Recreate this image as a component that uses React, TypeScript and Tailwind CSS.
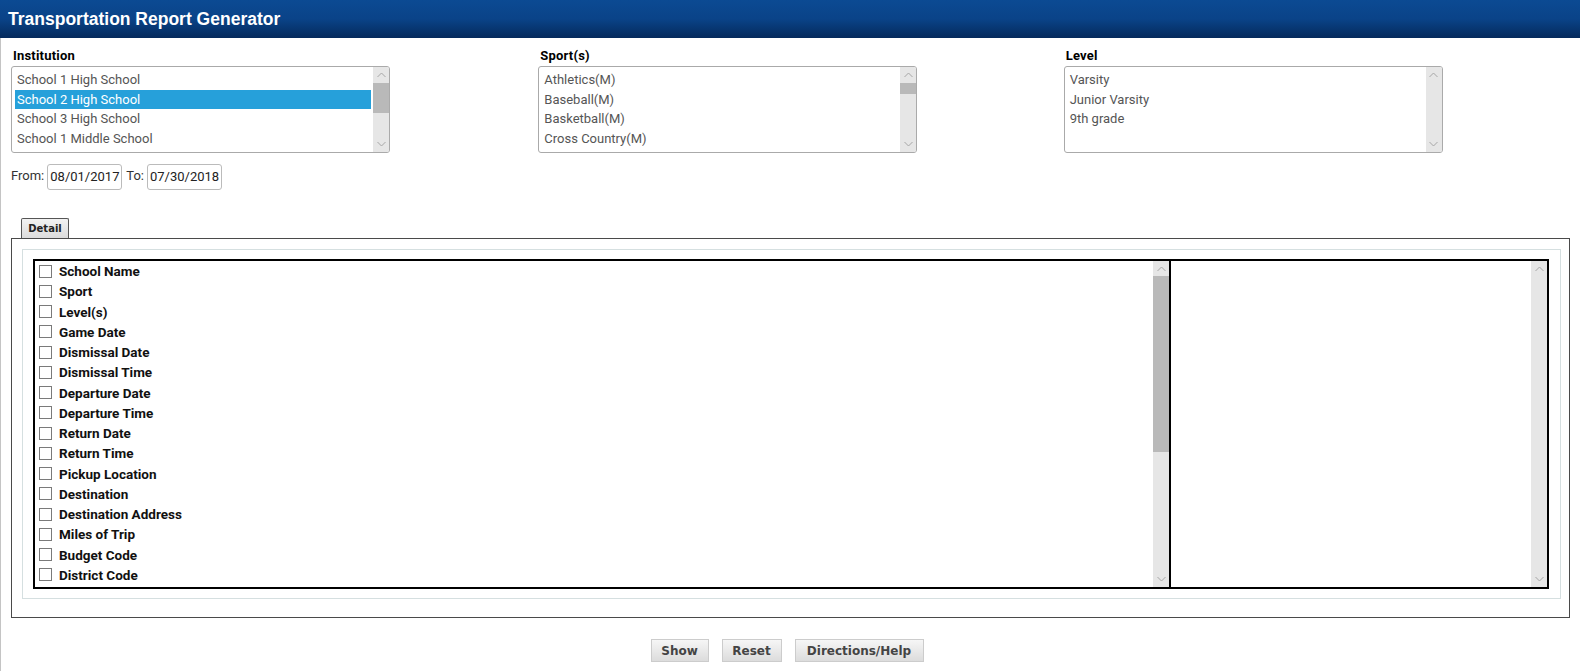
import React from 'react';

const INSTITUTIONS = ['School 1 High School', 'School 2 High School', 'School 3 High School', 'School 1 Middle School'];
const SPORTS = ['Athletics(M)', 'Baseball(M)', 'Basketball(M)', 'Cross Country(M)'];
const LEVELS = ['Varsity', 'Junior Varsity', '9th grade'];

const FIELDS = [
  'School Name',
  'Sport',
  'Level(s)',
  'Game Date',
  'Dismissal Date',
  'Dismissal Time',
  'Departure Date',
  'Departure Time',
  'Return Date',
  'Return Time',
  'Pickup Location',
  'Destination',
  'Destination Address',
  'Miles of Trip',
  'Budget Code',
  'District Code',
];

function Chevron({ up }: { up?: boolean }) {
  return (
    <svg width="9" height="6" viewBox="0 0 9 6" className="block">
      <polyline
        points={up ? '0.5,5 4.5,1 8.5,5' : '0.5,1 4.5,5 8.5,1'}
        fill="none"
        stroke="#a6a6a6"
        strokeWidth="1"
      />
    </svg>
  );
}

// fake scrollbar: thumb given as [top, height] in px
function Scrollbar({ thumb, arrow = 16 }: { thumb?: [number, number]; arrow?: number }) {
  return (
    <div className="w-[16px] h-full bg-[#e6e6e6] relative shrink-0">
      <div className="absolute top-0 left-0 w-full flex justify-center" style={{ height: arrow, paddingTop: 5 }}>
        <Chevron up />
      </div>
      {thumb && (
        <div className="absolute left-0 w-full bg-[#b9b9b9]" style={{ top: thumb[0], height: thumb[1] }} />
      )}
      <div className="absolute bottom-0 left-0 w-full flex justify-center pb-[5px]">
        <Chevron />
      </div>
    </div>
  );
}

function ListBox({ items, selected, thumb }: { items: string[]; selected?: number; thumb?: [number, number] }) {
  return (
    <div className="w-[379px] h-[87px] border border-[#aaaaaa] rounded-[3px] flex overflow-hidden bg-white">
      <div className="flex-1 pt-[3px] pl-[3px] pr-[2px]">
        {items.map((it, i) => (
          <div
            key={it}
            className={`h-[19.5px] leading-[19.5px] pl-[2px] text-[13px] ${
              i === selected ? 'bg-[#26a0da] text-white' : 'text-[#555555]'
            }`}
          >
            {it}
          </div>
        ))}
      </div>
      <Scrollbar thumb={thumb} />
    </div>
  );
}

function Btn({ w, children }: { w: string; children: React.ReactNode }) {
  return (
    <button
      className={`${w} h-[23px] border border-[#cccccc] bg-gradient-to-b from-[#f6f6f6] to-[#dcdcdc] text-[12px] font-bold text-[#444444] font-['DejaVu_Sans',sans-serif] flex items-center justify-center`}
    >
      {children}
    </button>
  );
}

export default function App() {
  return (
    <div className="w-[1580px] h-[671px] bg-white overflow-hidden font-['Roboto',sans-serif]">
      {/* Header */}
      <div className="h-[38px] flex items-center pl-[8px] bg-gradient-to-b from-[#0b4a93] via-[#0a4388] to-[#052a5c]">
        <span className="text-white text-[17.5px] font-bold font-['Liberation_Sans',Arial,sans-serif]">
          Transportation Report Generator
        </span>
      </div>

      <div className="h-[633px] border-l border-[#c4c4c4]">
        {/* Filters */}
        <div className="grid grid-cols-3 pt-[10px]">
          <div className="pl-[10px]">
            <div className="text-[13px] font-bold text-black leading-[16px] pl-[2px] mb-[2px] tracking-[0.2px]">Institution</div>
            <ListBox items={INSTITUTIONS} selected={1} thumb={[16, 30]} />
          </div>
          <div className="pl-[11px]">
            <div className="text-[13px] font-bold text-black leading-[16px] pl-[2px] mb-[2px] tracking-[0.2px]">Sport(s)</div>
            <ListBox items={SPORTS} thumb={[16, 11]} />
          </div>
          <div className="pl-[10px]">
            <div className="text-[13px] font-bold text-black leading-[16px] pl-[2px] mb-[2px] tracking-[0.2px]">Level</div>
            <ListBox items={LEVELS} />
          </div>
        </div>

        {/* Dates */}
        <div className="flex items-center pl-[10px] mt-[11px] text-[13px] text-[#333333]">
          <span className="mr-[3px] -mt-[3px]">From:</span>
          <div className="w-[75px] h-[26px] border border-[#bbbbbb] rounded-[3px] flex items-center pl-[2px] text-[#222222]">
            08/01/2017
          </div>
          <span className="ml-[4px] mr-[3px] -mt-[3px]">To:</span>
          <div className="w-[75px] h-[26px] border border-[#bbbbbb] rounded-[3px] flex items-center pl-[2px] text-[#222222]">
            07/30/2018
          </div>
        </div>

        {/* Tab */}
        <div className="mt-[28px] ml-[20px] w-[48px] h-[20px] border border-b-0 border-[#555555] rounded-t-[2px] bg-gradient-to-b from-[#f2f2f2] to-[#dcdcdc] flex items-center justify-center text-[10px] font-bold text-[#222222] font-['DejaVu_Sans',sans-serif]">
          Detail
        </div>

        {/* Panel */}
        <div className="ml-[10px] w-[1559px] h-[380px] border border-[#4a4a4a]">
          <div className="mt-[10px] ml-[10px] w-[1539px] h-[350px] border border-[#d5dfe0]">
            <div className="mt-[9px] ml-[10px] w-[1516px] h-[330px] border-2 border-black flex">
              {/* field list */}
              <div className="w-[1134px] h-full flex">
                <div className="flex-1 pl-[4px]">
                  {FIELDS.map((f) => (
                    <div key={f} className="h-[20.25px] flex items-center">
                      <div className="w-[13px] h-[13px] border border-[#7a7a7a] bg-white shrink-0" />
                      <span className="ml-[7px] text-[13.5px] font-bold text-[#111111]">{f}</span>
                    </div>
                  ))}
                </div>
                <Scrollbar thumb={[15, 176]} arrow={15} />
              </div>
              {/* selected list */}
              <div className="flex-1 h-full border-l-2 border-black flex">
                <div className="flex-1" />
                <Scrollbar arrow={15} />
              </div>
            </div>
          </div>
        </div>

        {/* Buttons */}
        <div className="mt-[21px] flex justify-center gap-[13px] pr-[7px]">
          <Btn w="w-[58px]">Show</Btn>
          <Btn w="w-[60px]">Reset</Btn>
          <Btn w="w-[129px]">Directions/Help</Btn>
        </div>
      </div>
    </div>
  );
}
